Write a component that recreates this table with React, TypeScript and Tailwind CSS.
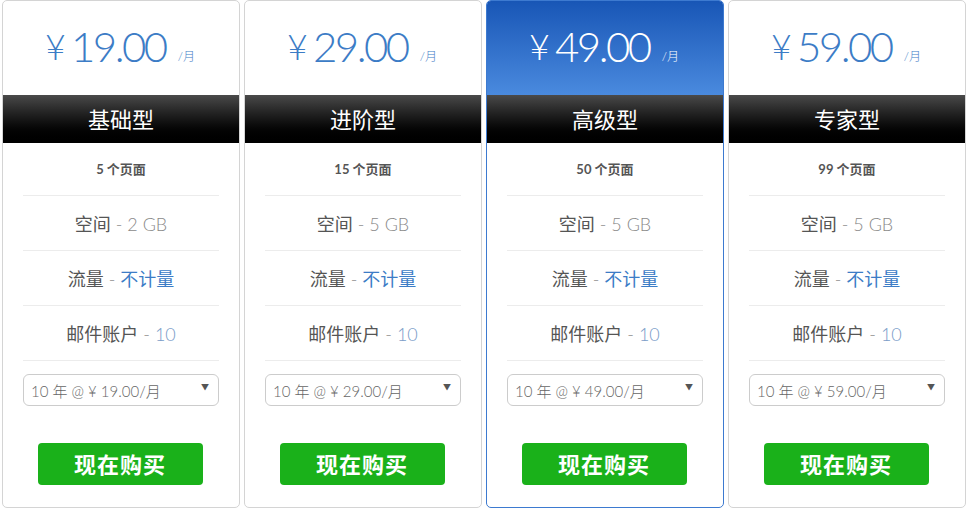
const plans = [
  { price: '19.00', name: '基础型', pages: '5', space: '2 GB', featured: false },
  { price: '29.00', name: '进阶型', pages: '15', space: '5 GB', featured: false },
  { price: '49.00', name: '高级型', pages: '50', space: '5 GB', featured: true },
  { price: '59.00', name: '专家型', pages: '99', space: '5 GB', featured: false },
]

const font = { fontFamily: '"Lato","Noto Sans CJK SC",sans-serif' }

const PlanCard = ({ plan }: { plan: (typeof plans)[number] }) => {
  return (
    <div
      className={`w-[238px] h-[508px] flex flex-col rounded-[5px] border overflow-hidden bg-white ${
        plan.featured ? 'border-[#3d7ad0]' : 'border-[#d4d4d4]'
      }`}
    >
      {/* price */}
      <div
        className={`h-[94px] flex items-center justify-center pr-[2px] ${
          plan.featured ? 'bg-gradient-to-b from-[#1856b6] to-[#4a8ade] text-white' : 'text-[#3c7cc6]'
        }`}
      >
        <span className="text-[36px] font-light mr-[5px] mt-[-4px]">¥</span>
        <span className="text-[42px] font-light tracking-[-2.5px] mt-[-4px]">{plan.price}</span>
        <span className="text-[12px] font-light ml-[12px] mt-[18px]">/月</span>
      </div>

      {/* title band */}
      <div className="h-[48px] flex items-center justify-center bg-gradient-to-b from-[#4a4a4a] to-[#000000] text-white text-[22px]">
        {plan.name}
      </div>

      {/* features */}
      <div className="px-[20px] flex flex-col">
        <div className="h-[53px] flex items-center justify-center border-b border-[#ececec] text-[13px] font-bold text-[#555] pt-[2px]">
          {plan.pages} 个页面
        </div>
        <div className="h-[55px] flex items-center justify-center border-b border-[#ececec] text-[18px] text-[#555] pt-[3px]">
          空间<span className="text-[#8a8a8a] font-light ml-[5px]">- {plan.space}</span>
        </div>
        <div className="h-[55px] flex items-center justify-center border-b border-[#ececec] text-[18px] text-[#555] pt-[3px]">
          流量<span className="text-[#8a8a8a] font-light mx-[5px]">-</span>
          <span className="text-[#3c7cc6]">不计量</span>
        </div>
        <div className="h-[55px] flex items-center justify-center border-b border-[#ececec] text-[18px] text-[#555] pt-[3px]">
          邮件账户<span className="text-[#8a8a8a] font-light mx-[5px]">-</span>
          <span className="text-[#7a9cc8] font-light">10</span>
        </div>
      </div>

      {/* select */}
      <div className="px-[20px] mt-[13px]">
        <div className="h-[32px] rounded-[6px] border border-[#cccccc] flex items-center pl-[7px] pr-[9px] text-[15px] text-[#666] font-light">
          <span className="pt-[2px]">10 年 @ ¥ {plan.price}/月</span>
          <span className="ml-auto text-[8px] text-[#555] mt-[-6px]">▼</span>
        </div>
      </div>

      {/* button */}
      <div className="flex justify-center mt-[37px] pr-[2px]">
        <button className="w-[165px] h-[42px] rounded-[4px] bg-[#1ab11a] text-white text-[22px] font-bold tracking-[1px]">
          现在购买
        </button>
      </div>
    </div>
  )
}

export default function App() {
  return (
    <div className="w-[968px] h-[511px] bg-white pl-[2px] flex gap-[4px]" style={font}>
      {plans.map(p => (
        <PlanCard key={p.name} plan={p} />
      ))}
    </div>
  )
}
